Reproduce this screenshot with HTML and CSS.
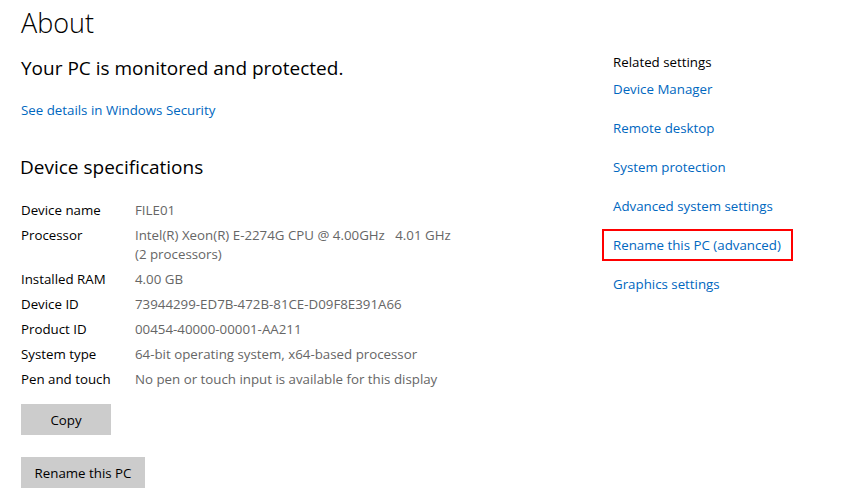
FILE: index.html
```html
<!DOCTYPE html>
<html>
<head>
<meta charset="utf-8">
<link rel="stylesheet" href="styles.css">
</head>
<body>
<div class="page">
  <main class="main">
    <h1 class="title">About</h1>
    <h2 class="status">Your PC is monitored and protected.</h2>
    <a class="link sec-link">See details in Windows Security</a>
    <h2 class="section">Device specifications</h2>
    <div class="specs">
      <div class="row"><span class="label">Device name</span><span class="value">FILE01</span></div>
      <div class="row"><span class="label">Processor</span><span class="value">Intel(R) Xeon(R) E-2274G CPU @ 4.00GHz&nbsp;&nbsp;&nbsp;4.01 GHz<br>(2 processors)</span></div>
      <div class="row"><span class="label">Installed RAM</span><span class="value">4.00 GB</span></div>
      <div class="row"><span class="label">Device ID</span><span class="value">73944299-ED7B-472B-81CE-D09F8E391A66</span></div>
      <div class="row"><span class="label">Product ID</span><span class="value">00454-40000-00001-AA211</span></div>
      <div class="row"><span class="label">System type</span><span class="value">64-bit operating system, x64-based processor</span></div>
      <div class="row"><span class="label">Pen and touch</span><span class="value">No pen or touch input is available for this display</span></div>
    </div>
    <button class="btn btn-copy">Copy</button>
    <button class="btn btn-rename">Rename this PC</button>
  </main>
  <aside class="side">
    <div class="side-title">Related settings</div>
    <a class="link side-link">Device Manager</a>
    <a class="link side-link">Remote desktop</a>
    <a class="link side-link">System protection</a>
    <a class="link side-link">Advanced system settings</a>
    <a class="link side-link highlighted">Rename this PC (advanced)</a>
    <a class="link side-link">Graphics settings</a>
  </aside>
</div>
</body>
</html>
```
FILE: styles.css
```css
* { box-sizing: border-box; }
html, body { margin: 0; padding: 0; background: #fff; }
body {
  font-family: "Open Sans", "Noto Sans", sans-serif;
  color: #000;
  width: 841px;
  height: 504px;
  overflow: hidden;
}
.page {
  display: flex;
  padding-left: 21px;
}
.main {
  width: 592px;
  display: flex;
  flex-direction: column;
  align-items: flex-start;
}
.title {
  margin: 4px 0 0 0;
  font-size: 27px;
  font-weight: 300;
  line-height: 38px;
}
.status {
  margin: 13px 0 0 0;
  font-size: 19px;
  font-weight: 400;
  line-height: 26px;
}
.link {
  color: #0067c0;
  font-size: 13.3px;
  text-decoration: none;
  line-height: 20px;
}
.sec-link { margin-top: 19px; }
.section {
  margin: 34px 0 0 -1px;
  font-size: 19px;
  font-weight: 400;
  line-height: 26px;
}
.specs {
  margin-top: 21px;
  display: flex;
  flex-direction: column;
  gap: 6px;
}
.row {
  display: flex;
  font-size: 13.3px;
  line-height: 19px;
}
.label { width: 114px; flex-shrink: 0; }
.value { color: #666; }
.btn {
  font-family: inherit;
  font-size: 13.3px;
  background: #ccc;
  border: none;
  height: 31px;
  padding: 0 14px;
  color: #000;
}
.btn-copy { width: 90px; margin-top: 15px; }
.btn-rename { width: 124px; padding: 0; margin-top: 22px; }
.side {
  display: flex;
  flex-direction: column;
  align-items: flex-start;
  padding-top: 52px;
}
.side-title {
  font-size: 13.3px;
  line-height: 20px;
}
.side-link {
  margin-top: 19px;
  padding: 0;
}
.side-title + .side-link { margin-top: 7px; }
.highlighted {
  position: relative;
}
.highlighted::after {
  content: "";
  position: absolute;
  top: -6px;
  bottom: -6px;
  left: -11px;
  right: -12px;
  border: 2px solid #f00;
}
```
